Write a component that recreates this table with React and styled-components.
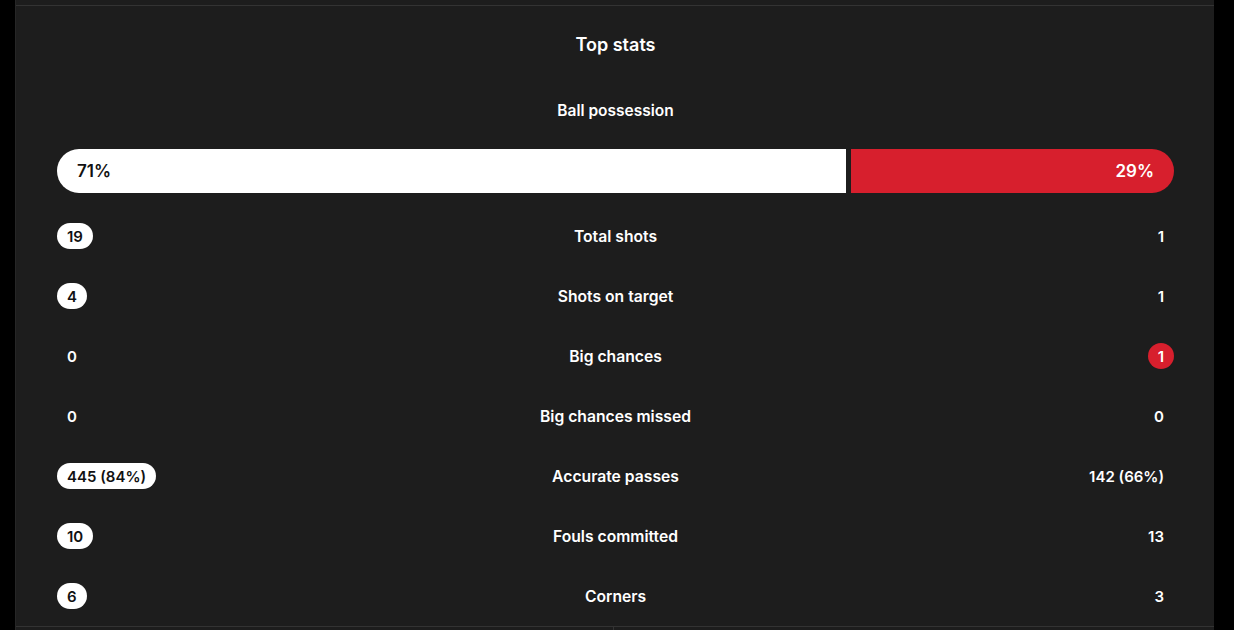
import React from "react";
import styled, { createGlobalStyle } from "styled-components";

const Global = createGlobalStyle`
  html, body { margin: 0; padding: 0; background: #000; }
  body { font-family: Inter, "Noto Sans", sans-serif; color: #fff; overflow: hidden; }
`;

const Page = styled.div`
  width: 1199px;
  margin-left: 15px;
  background: #1d1d1d;
  border-left: 1px solid #262626;
  padding-top: 5px;
  height: 630px;
  box-sizing: border-box;
`;

const Card = styled.section`
  border-top: 1px solid #333;
  border-bottom: 1px solid #333;
  padding: 27px 40px 0 41px;
  display: flex;
  flex-direction: column;
  align-items: stretch;
`;

const Title = styled.h2`
  margin: 0;
  text-align: center;
  font-size: 18px;
  line-height: 24px;
  font-weight: 600;
`;

const Subtitle = styled.div`
  margin-top: 44px;
  text-align: center;
  font-size: 15.5px;
  line-height: 20px;
  font-weight: 600;
`;

const Bar = styled.div`
  margin-top: 28px;
  display: flex;
  gap: 5px;
  height: 44px;
`;

const Segment = styled.div`
  flex: 0 1 auto;
  display: flex;
  align-items: center;
  justify-content: ${(p) => (p.$side === "left" ? "flex-start" : "flex-end")};
  padding: 0 20px;
  box-sizing: border-box;
  background: ${(p) => (p.$side === "left" ? "#fff" : "#d71f2d")};
  color: ${(p) => (p.$side === "left" ? "#111" : "#fff")};
  border-radius: ${(p) => (p.$side === "left" ? "22px 0 0 22px" : "0 22px 22px 0")};
  font-size: 17px;
  font-weight: 600;
`;

const Rows = styled.div`
  margin-top: 13px;
  display: flex;
  flex-direction: column;
`;

const Row = styled.div`
  height: 60px;
  display: grid;
  grid-template-columns: 1fr auto 1fr;
  align-items: center;
`;

const Label = styled.div`
  text-align: center;
  font-size: 15.7px;
  font-weight: 600;
`;

const Cell = styled.div`
  display: flex;
  justify-content: ${(p) => (p.$right ? "flex-end" : "flex-start")};
`;

const Pill = styled.span`
  display: inline-flex;
  align-items: center;
  justify-content: center;
  height: 26px;
  min-width: 26px;
  box-sizing: border-box;
  padding: 0 10px;
  border-radius: 13px;
  font-size: 15px;
  font-weight: 600;
  background: ${(p) =>
    p.$variant === "home" ? "#fff" : p.$variant === "away" ? "#d71f2d" : "transparent"};
  color: ${(p) => (p.$variant === "home" ? "#111" : "#fff")};
`;

const Next = styled.div`
  display: grid;
  grid-template-columns: 598px 1fr;
  height: 20px;
`;

const Col = styled.div`
  border-right: ${(p) => (p.$divider ? "1px solid #333" : "none")};
`;

const stats = [
  ["19", "Total shots", "1", "home"],
  ["4", "Shots on target", "1", "home"],
  ["0", "Big chances", "1", "away"],
  ["0", "Big chances missed", "0", null],
  ["445 (84%)", "Accurate passes", "142 (66%)", "home"],
  ["10", "Fouls committed", "13", "home"],
  ["6", "Corners", "3", "home"],
];

const possession = { home: 71, away: 29 };

export default function App() {
  return (
    <>
      <Global />
      <Page>
        <Card>
          <Title>Top stats</Title>
          <Subtitle>Ball possession</Subtitle>
          <Bar>
            <Segment $side="left" style={{ width: `${possession.home}%` }}>
              {possession.home}%
            </Segment>
            <Segment $side="right" style={{ width: `${possession.away}%` }}>
              {possession.away}%
            </Segment>
          </Bar>
          <Rows>
            {stats.map(([h, label, a, win]) => (
              <Row key={label}>
                <Cell>
                  <Pill $variant={win === "home" ? "home" : null}>{h}</Pill>
                </Cell>
                <Label>{label}</Label>
                <Cell $right>
                  <Pill $variant={win === "away" ? "away" : null}>{a}</Pill>
                </Cell>
              </Row>
            ))}
          </Rows>
        </Card>
        <Next>
          <Col $divider />
          <Col />
        </Next>
      </Page>
    </>
  );
}
